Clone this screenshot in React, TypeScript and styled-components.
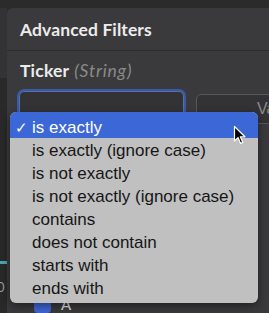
import styled, { createGlobalStyle } from "styled-components";
import { ArrowDownWideNarrow } from "lucide-react";

const GlobalStyle = createGlobalStyle`
  html, body {
    margin: 0;
    padding: 0;
    background: #2b2b2b;
    overflow: hidden;
  }
`;

const Screen = styled.div`
  position: relative;
  width: 269px;
  height: 313px;
  overflow: hidden;
  display: flex;
  padding-top: 8px;
  box-sizing: border-box;
  background: #2b2b2b;
  font-family: Lato, "Liberation Sans", sans-serif;
`;

const Gutter = styled.div`
  width: 8px;
  display: flex;
  flex-direction: column;
`;

const GutterTop = styled.div`
  height: 70px;
  background: #333335;
`;

const GutterBottom = styled.div`
  flex: 1;
  background: #29292a;
  display: flex;
  flex-direction: column;
  padding-top: 183px;
  gap: 16px;
`;

const TealLine = styled.div`
  height: 3px;
  width: 7px;
  background: #4da3b0;
`;

const GutterDigit = styled.span`
  font-size: 13px;
  color: #9a9a9a;
  margin-left: -3px;
  line-height: 14px;
`;

const Panel = styled.div`
  flex: 1;
  background: #3a3a3c;
  border-top-left-radius: 6px;
  display: flex;
  flex-direction: column;
`;

const Header = styled.div`
  height: 52px;
  box-sizing: border-box;
  padding: 12px 0 0 13px;
  border-bottom: 1px solid #2d2d2e;
  display: flex;
  justify-content: space-between;
  align-items: flex-start;
`;

const Title = styled.h1`
  margin: 0;
  font-size: 17.5px;
  line-height: 20px;
  font-weight: 700;
  color: #ececec;
  letter-spacing: 0.1px;
`;

const SortIcon = styled(ArrowDownWideNarrow)`
  color: #8d8d8d;
  margin-top: 3px;
  margin-right: -2px;
`;

const Body = styled.div`
  padding: 10px 0 0 12px;
  display: flex;
  flex-direction: column;
`;

const FieldLabel = styled.div`
  font-size: 17.5px;
  line-height: 20px;
  font-weight: 700;
  color: #ececec;
  padding-left: 1px;
  letter-spacing: 0.2px;
`;

const FieldType = styled.em`
  font-weight: 400;
  color: #8a8a8a;
  margin-left: 5px;
  letter-spacing: 0.8px;
`;

const SelectRow = styled.div`
  display: flex;
  gap: 12px;
  margin-top: 10px;
`;

const Select = styled.div<{ $focused?: boolean }>`
  flex: ${(p) => (p.$focused ? "0 0 165px" : "1")};
  height: 30px;
  box-sizing: border-box;
  border-radius: 5px;
  background: #333335;
  border: 1px solid ${(p) => (p.$focused ? "#4f6fb8" : "#58585a")};
  box-shadow: ${(p) => (p.$focused ? "0 0 0 2px #3b5a9e" : "none")};
  margin-top: ${(p) => (p.$focused ? "0" : "3px")};
  display: flex;
  align-items: center;
  padding-left: 60px;
  font-family: "Liberation Sans", sans-serif;
  font-size: 16px;
  color: #8a8a8a;
  white-space: nowrap;
`;

const CheckList = styled.div`
  margin-top: 171px;
  padding-left: 15px;
  display: flex;
  align-items: center;
  gap: 10px;
`;

const CheckBox = styled.div`
  width: 17px;
  height: 17px;
  border-radius: 4px;
  background: #3f66d4;
`;

const CheckLabel = styled.span`
  color: #e0e0e0;
  font-size: 15px;
`;

const Menu = styled.ul`
  position: absolute;
  left: 10px;
  top: 112px;
  width: 248px;
  margin: 0;
  padding: 0 0 4px;
  list-style: none;
  background: #c0c0c0;
  border-radius: 6px;
  overflow: hidden;
  box-shadow: 0 3px 10px rgba(0, 0, 0, 0.45);
  font-family: "Liberation Sans", Arial, sans-serif;
  font-size: 17px;
`;

const MenuItem = styled.li<{ $active?: boolean }>`
  position: relative;
  height: ${(p) => (p.$active ? "26px" : "23px")};
  line-height: 23px;
  padding: ${(p) => (p.$active ? "4px 0 0 22px" : "1px 0 0 22px")};
  box-sizing: border-box;
  background: ${(p) => (p.$active ? "#3c68d7" : "transparent")};
  color: ${(p) => (p.$active ? "#ffffff" : "#161616")};
  white-space: nowrap;
`;

const Check = styled.span`
  position: absolute;
  left: 5px;
  font-size: 15px;
`;

const Cursor = styled.svg`
  position: absolute;
  left: 233px;
  top: 125px;
`;

const options = [
  "is exactly",
  "is exactly (ignore case)",
  "is not exactly",
  "is not exactly (ignore case)",
  "contains",
  "does not contain",
  "starts with",
  "ends with",
];

const App = () => {
  return (
    <Screen>
      <GlobalStyle />
      <Gutter>
        <GutterTop />
        <GutterBottom>
          <TealLine />
          <GutterDigit>0</GutterDigit>
        </GutterBottom>
      </Gutter>
      <Panel>
        <Header>
          <Title>Advanced Filters</Title>
          <SortIcon size={17} strokeWidth={2} />
        </Header>
        <Body>
          <FieldLabel>
            Ticker<FieldType>(String)</FieldType>
          </FieldLabel>
          <SelectRow>
            <Select $focused />
            <Select>Value</Select>
          </SelectRow>
          <CheckList>
            <CheckBox />
            <CheckLabel>A</CheckLabel>
          </CheckList>
        </Body>
      </Panel>
      <Menu>
        {options.map((opt, i) => (
          <MenuItem key={opt} $active={i === 0}>
            {i === 0 && <Check>✓</Check>}
            {opt}
          </MenuItem>
        ))}
      </Menu>
      <Cursor width="14" height="20" viewBox="0 0 14 20">
        <path
          d="M1.5 1.5 L1.5 16 L5 12.6 L7.6 18.4 L9.8 17.4 L7.3 11.8 L12 11.8 Z"
          fill="#000"
          stroke="#fff"
          strokeWidth="1.2"
          strokeLinejoin="round"
        />
      </Cursor>
    </Screen>
  );
};

export default App;
